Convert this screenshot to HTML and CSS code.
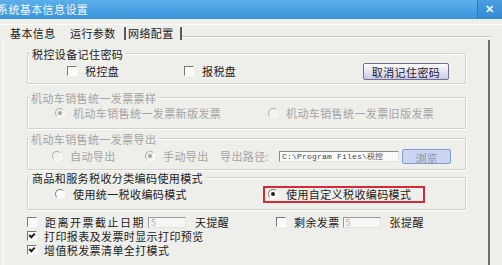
FILE: index.html
```html
<!DOCTYPE html>
<html>
  <head>
    <link rel="stylesheet" href="styles.css">
  </head>

  <body>
    <div class="titlebar">
      <span class="title">系统基本信息设置</span>
      <span class="close">✕</span>
    </div>

    <div class="tabs">
      <span class="tab tab1">基本信息</span>
      <span class="tab tab2">运行参数</span>
      <span class="tab tab3">网络配置</span>
      <span class="tabfill"></span>
    </div>

    <div class="panel">
      <div class="group g1">
        <span class="legend">税控设备记住密码</span>
        <div class="row r1">
          <span class="opt w117"><i class="chk"></i>税控盘</span>
          <span class="opt w179"><i class="chk"></i>报税盘</span>
          <button class="btn">取消记住密码</button>
        </div>
      </div>

      <div class="group g2 off">
        <span class="legend">机动车销售统一发票票样</span>
        <div class="row r2">
          <span class="opt w213"><i class="rad on"></i>机动车销售统一发票新版发票</span>
          <span class="opt"><i class="rad"></i>机动车销售统一发票旧版发票</span>
        </div>
      </div>

      <div class="group g3 off">
        <span class="legend">机动车销售统一发票导出</span>
        <div class="row r3">
          <span class="opt w93"><i class="rad"></i>自动导出</span>
          <span class="opt w75"><i class="rad on"></i>手动导出</span>
          <span class="pathlabel">导出路径:</span>
          <span class="pathbox">C:\Program Files\税控</span>
          <button class="browse">浏览</button>
        </div>
      </div>

      <div class="group g4">
        <span class="legend">商品和服务税收分类编码使用模式</span>
        <div class="row r4">
          <span class="opt w208"><i class="rad"></i>使用统一税收编码模式</span>
          <span class="opt mark"><i class="rad on"></i>使用自定义税收编码模式</span>
        </div>
      </div>

      <div class="line first">
        <span class="half">
          <span class="opt wide"><i class="chk"></i>距离开票截止日期</span>
          <span class="numbox">5</span>
          <span class="after">天提醒</span>
        </span>
        <span class="opt"><i class="chk"></i>剩余发票</span>
        <span class="numbox">5</span>
        <span class="after">张提醒</span>
      </div>
      <div class="line">
        <span class="opt"><i class="chk on"></i>打印报表及发票时显示打印预览</span>
      </div>
      <div class="line">
        <span class="opt"><i class="chk on"></i>增值税发票清单全打模式</span>
      </div>
    </div>
  </body>
</html>
```

FILE: styles.css
```css
body {
  margin: 0;
  width: 502px;
  height: 265px;
  overflow: hidden;
  background-color: #eeeeea;
  font-family: "Noto Sans CJK SC", "Liberation Sans", sans-serif;
  font-size: 11px;
  letter-spacing: 0.4px;
  color: #222;
}

.titlebar {
  height: 19px;
  display: flex;
  background: linear-gradient(#5cb0ea, #3a93da);
  color: #f2f7fc;
}

.title {
  flex: 1;
  margin-left: -3px;
  line-height: 19px;
}

.close {
  width: 24px;
  border-left: 1px solid #3079bd;
  background: linear-gradient(#4b9fe0, #3389d2);
  text-align: center;
  line-height: 17px;
  font-size: 11px;
  font-weight: 700;
  color: #e4f0fb;
}

.tabs {
  margin-top: 5px;
  border-top: 1px solid #fbfbf9;
  height: 15px;
  display: flex;
  align-items: flex-start;
  padding-left: 10px;
}

.tab {
  margin-top: 2px;
  line-height: 13px;
}

.tab1 {
  width: 60px;
}

.tab2 {
  width: 54px;
}

.tab3 {
  border-left: 2px solid #5a5a5a;
  border-right: 2px solid #5a5a5a;
  padding: 0 6px 0 2px;
}

.tabfill {
  flex: 1;
  height: 11px;
  margin-right: 10px;
  border-bottom: 1px solid #c9c9c4;
  box-shadow: 0 1px 0 #fff;
}

.panel {
  height: 225px;
  margin-left: 3px;
  width: 487px;
  border-left: 1px solid #fafaf8;
  border-right: 2px solid #6d6d6d;
  padding-top: 13px;
  box-sizing: border-box;
}

.group {
  margin-left: 23px;
  width: 437px;
  border: 1px solid #d2d2cb;
  box-shadow: inset 1px 1px 0 #fff, 1px 1px 0 #fff;
  display: flex;
  flex-direction: column;
  align-items: flex-start;
}

.legend {
  margin: -7px 0 0 2px;
  padding: 0 2px;
  line-height: 14px;
  background-color: #eeeeea;
}

.g1 { height: 29px; }
.g2 { height: 30px; margin-top: 13px; }
.g3 { height: 30px; margin-top: 9px; }
.g4 { height: 31px; margin-top: 7px; }

.g2 .legend, .g3 .legend {
  margin-left: 1px;
}

.row {
  display: flex;
  align-items: center;
  width: 100%;
  box-sizing: border-box;
}

.r1 { height: 20px; padding-left: 39px; }
.r2 { height: 16px; padding-left: 27px; }
.r3 { height: 20px; padding-left: 24px; }
.r4 { height: 18px; padding-left: 27px; }

.opt {
  display: flex;
  align-items: center;
  gap: 6px;
  white-space: nowrap;
  line-height: 14px;
}

.w117 { width: 117px; }
.w179 { width: 179px; }
.w213 { width: 213px; }
.w93 { width: 93px; }
.w75 { width: 75px; }
.w208 { width: 208px; }

.chk {
  width: 10px;
  height: 10px;
  box-sizing: border-box;
  border-top: 1px solid #777;
  border-left: 1px solid #777;
  border-right: 1px solid #fff;
  border-bottom: 1px solid #fff;
  background-color: #fafafa;
  margin-right: 2px;
}

.chk.on::after {
  content: "";
  display: block;
  width: 4px;
  height: 2px;
  margin: 1px 0 0 1px;
  border-left: 2px solid #222;
  border-bottom: 2px solid #222;
  transform: rotate(-45deg);
}

.rad {
  width: 10px;
  height: 10px;
  box-sizing: border-box;
  border-radius: 50%;
  border: 1px solid;
  border-color: #7d7d7d #fff #fff #7d7d7d;
  background-color: #fafafa;
  display: flex;
  align-items: center;
  justify-content: center;
  margin-right: 2px;
}

.rad.on::after {
  content: "";
  width: 4px;
  height: 4px;
  border-radius: 50%;
  background-color: #222;
}

.off {
  color: #a4a4a4;
}

.off .rad {
  border-color: #b0b0b0 #fff #fff #b0b0b0;
  background-color: #f2f2ef;
}

.off .rad.on::after {
  background-color: #a4a4a4;
}

.btn {
  width: 86px;
  height: 17px;
  padding: 0;
  font-family: inherit;
  font-size: 11px;
  letter-spacing: 0.4px;
  color: #1e1e2e;
  border: 1px solid #70708c;
  border-radius: 2px;
  background: linear-gradient(#fdfdff, #cacae6);
}

.pathlabel {
  width: 59px;
}

.pathbox {
  width: 120px;
  height: 11px;
  box-sizing: border-box;
  border: 1px solid #8a8a8a;
  border-right-color: #e0e0e0;
  border-bottom-color: #e0e0e0;
  background-color: #fbfbfb;
  color: #444;
  font-family: "Liberation Mono", monospace;
  font-size: 8px;
  letter-spacing: 0.2px;
  line-height: 9px;
  padding-left: 2px;
  overflow: hidden;
  white-space: nowrap;
}

.browse {
  margin-left: 3px;
  width: 49px;
  height: 15px;
  padding: 0;
  font-family: inherit;
  font-size: 11px;
  color: #8e8ea4;
  border: 1px solid #7e9bd2;
  border-radius: 2px;
  background-color: #c9d5f1;
}

.mark {
  height: 17px;
  width: 162px;
  box-sizing: border-box;
  border: 2px solid #d12b3a;
  padding-left: 3px;
}

.line {
  height: 14px;
  display: flex;
  align-items: center;
  padding-left: 23px;
}

.line.first {
  margin-top: 5px;
}

.line .opt {
  gap: 5px;
  line-height: 13px;
}

.first .opt {
  gap: 6px;
}

.first .wide {
  letter-spacing: 1.5px;
}

.half {
  width: 249px;
  display: flex;
  align-items: center;
}

.numbox {
  width: 38px;
  height: 11px;
  box-sizing: border-box;
  margin-left: 3px;
  border: 1px solid #9a9a9a;
  border-right-color: #e2e2e2;
  border-bottom-color: #e2e2e2;
  background-color: #f6f6f4;
  color: #a8a8a8;
  font-size: 9px;
  line-height: 9px;
  padding-left: 2px;
}

.after {
  margin-left: 9px;
}
```
